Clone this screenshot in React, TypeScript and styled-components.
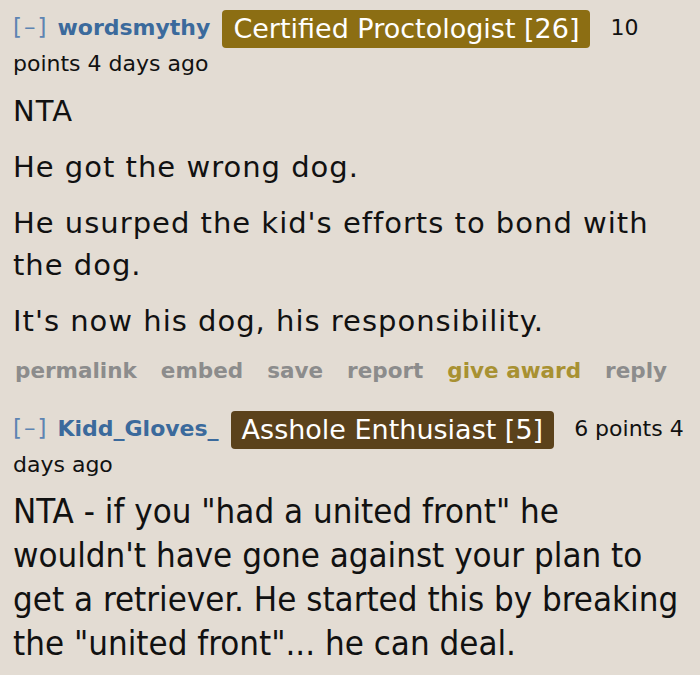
import styled, { createGlobalStyle } from "styled-components"

const GlobalStyle = createGlobalStyle`
  html, body {
    margin: 0;
    padding: 0;
    background: #e3dcd3;
  }
`

const Page = styled.div`
  padding: 10px 13px 0 13px;
  font-family: "DejaVu Sans", Verdana, sans-serif;
  color: #111;
`

const Comment = styled.div`
  margin-bottom: 25px;
`

const Tagline = styled.div`
  font-size: 22px;
  line-height: 32px;
  color: #111;
`

const Expand = styled.span`
  color: #5d84b2;
  font-size: 23px;
  margin-right: 9px;
  letter-spacing: 2px;
`

const Author = styled.span`
  color: #3b6a9c;
  font-weight: bold;
  margin-right: 12px;
`

const Flair = styled.span<{ $bg: string }>`
  display: inline-block;
  background: ${(p) => p.$bg};
  color: #fff;
  font-size: 27px;
  line-height: 38px;
  padding: 0 11px;
  border-radius: 4px;
  margin-right: 20px;
  vertical-align: middle;
`

const Body = styled.div<{ $condensed?: boolean }>`
  font-family: ${(p) =>
    p.$condensed ? '"DejaVu Sans Condensed", Tahoma, sans-serif' : '"DejaVu Sans", Verdana, sans-serif'};
  font-size: ${(p) => (p.$condensed ? "34.6px" : "29px")};
  letter-spacing: ${(p) => (p.$condensed ? "0" : "1px")};
  line-height: ${(p) => (p.$condensed ? "44px" : "42px")};
  margin-top: ${(p) => (p.$condensed ? "8px" : "10px")};

  p {
    margin: 0 0 14px 0;
  }
`

const Actions = styled.ul`
  list-style: none;
  display: flex;
  gap: 24px;
  margin: 0;
  padding: 0 0 0 2px;
  font-size: 21.5px;
  line-height: 30px;
  font-weight: bold;
`

const Action = styled.li<{ $gold?: boolean }>`
  color: ${(p) => (p.$gold ? "#a89132" : "#8c8c8c")};
`

export default function App() {
  return (
    <>
      <GlobalStyle />
      <Page>
        <Comment>
          <Tagline>
            <Expand>[–]</Expand>
            <Author>wordsmythy</Author>
            <Flair $bg="#8c6e13">Certified Proctologist [26]</Flair>
            10 points 4 days ago
          </Tagline>
          <Body>
            <p>NTA</p>
            <p>He got the wrong dog.</p>
            <p>He usurped the kid's efforts to bond with the dog.</p>
            <p>It's now his dog, his responsibility.</p>
          </Body>
          <Actions>
            <Action>permalink</Action>
            <Action>embed</Action>
            <Action>save</Action>
            <Action>report</Action>
            <Action $gold>give award</Action>
            <Action>reply</Action>
          </Actions>
        </Comment>
        <Comment>
          <Tagline>
            <Expand>[–]</Expand>
            <Author>Kidd_Gloves_</Author>
            <Flair $bg="#5b421b">Asshole Enthusiast [5]</Flair>
            6 points 4 days ago
          </Tagline>
          <Body $condensed>
            <p>
              NTA - if you "had a united front" he wouldn't have gone against your plan to get a
              retriever. He started this by breaking the "united front"... he can deal.
            </p>
          </Body>
        </Comment>
      </Page>
    </>
  )
}
